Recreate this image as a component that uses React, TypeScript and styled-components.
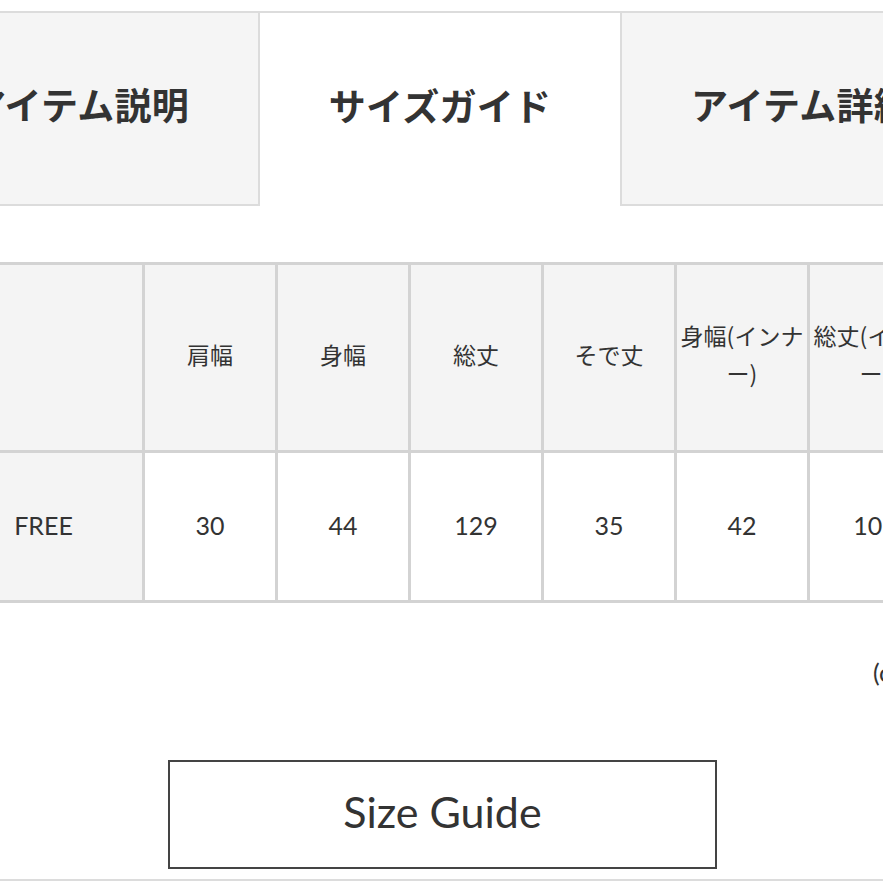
import React from "react";
import styled, { createGlobalStyle } from "styled-components";

const Global = createGlobalStyle`
  html, body { margin: 0; padding: 0; background: #fff; }
  body {
    overflow: hidden;
    width: 883px;
    height: 883px;
    font-family: "Lato", "Noto Sans CJK JP", sans-serif;
    color: #333;
  }
`;

const Page = styled.div`
  width: 1200px;
  margin-left: -100px;
  display: flex;
  flex-direction: column;
`;

const TabBar = styled.div`
  margin-top: 11px;
  display: flex;
  border-top: 2px solid #dcdcdc;
`;

const Tab = styled.div<{ $active?: boolean; $side?: "left" | "right" }>`
  box-sizing: border-box;
  width: 360px;
  height: 193px;
  padding-bottom: 10px;
  display: flex;
  align-items: center;
  justify-content: center;
  font-family: "Noto Sans CJK JP", sans-serif;
  font-weight: 700;
  font-size: 37px;
  letter-spacing: 0.3px;
  color: #333;
  background: ${(p) => (p.$active ? "#fff" : "#f5f5f5")};
  border-bottom: ${(p) => (p.$active ? "none" : "2px solid #dcdcdc")};
  border-right: ${(p) => (p.$side === "left" ? "2px solid #dcdcdc" : "none")};
  border-left: ${(p) => (p.$side === "right" ? "2px solid #dcdcdc" : "none")};
`;

const Table = styled.table`
  margin-top: 56px;
  margin-left: 42px;
  width: 998px;
  border-collapse: collapse;
  table-layout: fixed;
`;

const HeadCell = styled.th<{ $corner?: boolean }>`
  box-sizing: border-box;
  width: ${(p) => (p.$corner ? "200px" : "133px")};
  height: 188px;
  padding: 0 0 8px;
  border: 3px solid #d3d3d3;
  background: #f4f4f4;
  font-family: "Noto Sans CJK JP", sans-serif;
  font-weight: 400;
  font-size: 23px;
  line-height: 38px;
  color: #333;
  text-align: center;
  vertical-align: middle;
`;

const DataCell = styled.td<{ $label?: boolean }>`
  box-sizing: border-box;
  height: 150px;
  padding: 0 0 4px;
  border: 3px solid #d3d3d3;
  background: ${(p) => (p.$label ? "#f4f4f4" : "#fff")};
  font-family: "Lato", "Noto Sans CJK JP", sans-serif;
  font-size: 25px;
  color: #333;
  text-align: center;
  vertical-align: middle;
`;

const NoteRow = styled.div`
  margin-top: 54px;
  padding-left: 973px;
  font-family: "Lato", "Noto Sans CJK JP", sans-serif;
  font-size: 25px;
  line-height: 30px;
  color: #333;
  white-space: nowrap;
`;

const ButtonRow = styled.div`
  margin-top: 73px;
  padding-left: 268px;
  display: flex;
`;

const GuideButton = styled.button`
  box-sizing: border-box;
  width: 549px;
  height: 109px;
  padding: 0 0 6px;
  border: 2.5px solid #444;
  background: #fff;
  font-family: "Lato", sans-serif;
  font-size: 43px;
  color: #333;
  cursor: pointer;
  display: flex;
  align-items: center;
  justify-content: center;
`;

const BottomRule = styled.div`
  margin-top: 10px;
  border-top: 2px solid #dcdcdc;
`;

const headers = ["肩幅", "身幅", "総丈", "そで丈", "身幅(インナー)", "総丈(インナー)"];
const values = ["30", "44", "129", "35", "42", "106"];

export default function App() {
  return (
    <>
      <Global />
      <Page>
        <TabBar>
          <Tab $side="left">アイテム説明</Tab>
          <Tab $active>サイズガイド</Tab>
          <Tab $side="right">アイテム詳細</Tab>
        </TabBar>
        <Table>
          <thead>
            <tr>
              <HeadCell $corner />
              {headers.map((h) => (
                <HeadCell key={h}>{h}</HeadCell>
              ))}
            </tr>
          </thead>
          <tbody>
            <tr>
              <DataCell $label>FREE</DataCell>
              {values.map((v, i) => (
                <DataCell key={i}>{v}</DataCell>
              ))}
            </tr>
          </tbody>
        </Table>
        <NoteRow>(cm)</NoteRow>
        <ButtonRow>
          <GuideButton>Size Guide</GuideButton>
        </ButtonRow>
        <BottomRule />
      </Page>
    </>
  );
}
